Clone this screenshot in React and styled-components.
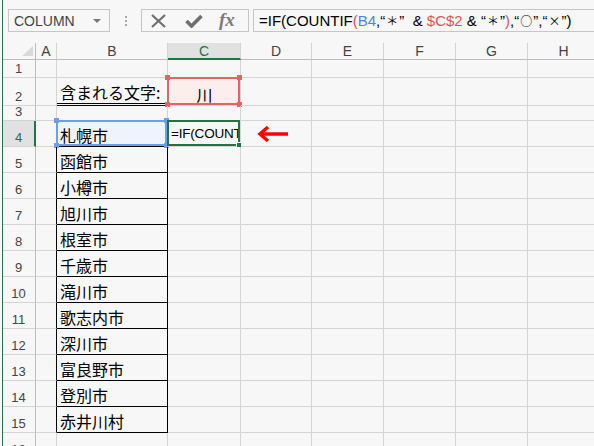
import React from 'react';
import styled, { createGlobalStyle } from 'styled-components';

const GlobalStyle = createGlobalStyle`
  html, body { margin: 0; padding: 0; background: #f7f7f7; }
  * { box-sizing: border-box; }
`;

const cities = ['札幌市', '函館市', '小樽市', '旭川市', '根室市', '千歳市', '滝川市', '歌志内市', '深川市', '富良野市', '登別市', '赤井川村'];
const letters = ['A', 'B', 'C', 'D', 'E', 'F', 'G', 'H'];
const rows = Array.from({ length: 16 }, (_, i) => i + 1);

const GRID = '#d4d4d4';
const HEAD_LINE = '#bcbcbc';
const GREEN = '#217346';
const RED = '#e06666';
const BLUE = '#6d9eeb';

function App() {
    return (
        <>
            <GlobalStyle />
            <Page>
                <Window>
                    <Toolbar>
                        <NameBox>
                            <span>COLUMN</span>
                            <DropArrow />
                        </NameBox>
                        <Grip>
                            <i /><i /><i />
                        </Grip>
                        <FxGroup>
                            <svg width="17" height="14" viewBox="0 0 17 14">
                                <path d="M2 1 L15 13 M15 1 L2 13" stroke="#6f6f6f" strokeWidth="2.2" fill="none" />
                            </svg>
                            <svg width="18" height="14" viewBox="0 0 18 14">
                                <path d="M1.5 7 L6.5 12 L16.5 2" stroke="#6f6f6f" strokeWidth="3.6" fill="none" />
                            </svg>
                            <FxText>fx</FxText>
                        </FxGroup>
                        <FormulaBox>
                            =IF(COUNTIF<Red>(</Red><Blue>B4</Blue>,“<Sym>＊</Sym>”  &amp; <Red>$C$2</Red> &amp; “<Sym>＊</Sym>”<Red>)</Red>,“<Sym>○</Sym>”,“<Sym>×</Sym>”)
                        </FormulaBox>
                    </Toolbar>

                    <Sheet>
                        <Corner>
                            <svg width="11" height="10" viewBox="0 0 11 10">
                                <polygon points="11,0 11,10 0,10" fill="#d9d9d9" />
                            </svg>
                        </Corner>
                        {letters.map((l) => (
                            <ColHead key={l} $active={l === 'C'}>{l}</ColHead>
                        ))}

                        {rows.map((r) => {
                            const inTable = r >= 4 && r <= 15;
                            return (
                                <React.Fragment key={r}>
                                    <RowHead $active={r === 4}>{r}</RowHead>
                                    <Cell $right={inTable ? '#000' : GRID} />
                                    <Cell
                                        $right={inTable ? '#000' : GRID}
                                        $bottom={r === 2 ? '3px double #000' : (r === 3 || inTable) ? '1px solid #000' : undefined}
                                        $fill={r === 4 ? '#eef3fd' : undefined}
                                    >
                                        {r === 2 && '含まれる文字:'}
                                        {inTable && cities[r - 4]}
                                        {r === 4 && (
                                            <Selection $color={BLUE}>
                                                <Handle $color={BLUE} $v="top" $h="left" />
                                                <Handle $color={BLUE} $v="top" $h="right" />
                                                <Handle $color={BLUE} $v="bottom" $h="left" />
                                                <Handle $color={BLUE} $v="bottom" $h="right" />
                                            </Selection>
                                        )}
                                    </Cell>
                                    <Cell $center={r === 2} $fill={r === 2 ? '#fdeeee' : undefined}>
                                        {r === 2 && '川'}
                                        {r === 2 && (
                                            <Selection $color={RED}>
                                                <Handle $color={RED} $v="top" $h="left" />
                                                <Handle $color={RED} $v="top" $h="right" />
                                                <Handle $color={RED} $v="bottom" $h="left" />
                                                <Handle $color={RED} $v="bottom" $h="right" />
                                            </Selection>
                                        )}
                                        {r === 4 && <Clip>=IF(COUNTIF(B4,“＊”</Clip>}
                                        {r === 4 && (
                                            <Selection $color={GREEN}>
                                                <FillHandle />
                                            </Selection>
                                        )}
                                    </Cell>
                                    <Cell $arrow={r === 4}>
                                        {r === 4 && (
                                            <svg width="32" height="20" viewBox="0 0 32 20">
                                                <path d="M4 10 L31 10" stroke="#ff0000" strokeWidth="3.5" fill="none" />
                                                <path d="M11 3 L3 10 L11 17" stroke="#ff0000" strokeWidth="3.5" fill="none" strokeLinejoin="miter" />
                                            </svg>
                                        )}
                                    </Cell>
                                    <Cell />
                                    <Cell />
                                    <Cell />
                                    <Cell />
                                </React.Fragment>
                            );
                        })}
                    </Sheet>
                </Window>
            </Page>
        </>
    );
}

export default App;

const Page = styled.div`
    height: 446px;
    width: 594px;
    padding-left: 2px;
    background: #f7f7f7;
    overflow: hidden;
    display: flex;
`;

const Window = styled.div`
    flex: 1;
    min-width: 0;
    border-left: 1px solid ${GREEN};
    display: flex;
    flex-direction: column;
`;

const Toolbar = styled.div`
    height: 43px;
    flex: none;
    display: flex;
    align-items: flex-start;
    padding: 9px 0 0 5px;
    font-family: "Liberation Sans", "Noto Sans CJK JP", sans-serif;
`;

const NameBox = styled.div`
    width: 102px;
    height: 23px;
    border: 1px solid #c6c6c6;
    display: flex;
    align-items: center;
    justify-content: space-between;
    padding: 0 8px 0 5px;
    font-size: 14px;
    color: #444;
`;

const DropArrow = styled.span`
    width: 0;
    height: 0;
    border-left: 4px solid transparent;
    border-right: 4px solid transparent;
    border-top: 4px solid #777;
`;

const Grip = styled.div`
    width: 31px;
    height: 23px;
    display: flex;
    flex-direction: column;
    align-items: center;
    justify-content: center;
    gap: 2px;

    i {
        width: 2px;
        height: 2px;
        background: #a8a8a8;
    }
`;

const FxGroup = styled.div`
    width: 108px;
    height: 23px;
    border: 1px solid #c6c6c6;
    display: flex;
    align-items: center;
    padding-left: 8px;
    gap: 18px;
`;

const FxText = styled.span`
    font: italic bold 19px "Liberation Serif", "DejaVu Serif", serif;
    color: #7a7a7a;
    margin-left: -2px;
    margin-top: -1px;
`;

const FormulaBox = styled.div`
    flex: 1;
    margin-left: 4px;
    height: 23px;
    border: 1px solid #c6c6c6;
    border-right: none;
    padding-left: 5px;
    display: flex;
    align-items: center;
    white-space: pre;
    font-size: 15px;
    color: #000;
    overflow: hidden;
`;

const Sym = styled.span`
    font-family: "Noto Sans CJK JP", sans-serif;
    font-size: 12px;
    line-height: 20px;
    padding: 0 1px;
`;

const Red = styled.span`
    color: #e5504f;
`;

const Blue = styled.span`
    color: #4a86e8;
`;

const Sheet = styled.div`
    display: grid;
    grid-template-columns: 33px 21px 111px 73px 71px 72px 72px 72px 72px;
    grid-template-rows: 17px 18px 28px 15px repeat(13, 26px);
    font-family: "Noto Sans CJK JP", sans-serif;
`;

const Corner = styled.div`
    border-right: 1px solid ${HEAD_LINE};
    border-bottom: 1px solid ${HEAD_LINE};
    display: flex;
    align-items: flex-end;
    justify-content: flex-end;
    padding: 0 2px 3px 0;
`;

const ColHead = styled.div`
    border-right: 1px solid ${GRID};
    border-bottom: ${(p) => (p.$active ? `2px solid ${GREEN}` : `1px solid ${HEAD_LINE}`)};
    background: ${(p) => (p.$active ? '#e1e1e1' : 'transparent')};
    color: ${(p) => (p.$active ? GREEN : '#444')};
    font: 14px "Liberation Sans", sans-serif;
    display: flex;
    align-items: center;
    justify-content: center;
    padding-top: ${(p) => (p.$active ? '1px' : '0')};
`;

const RowHead = styled.div`
    border-right: ${(p) => (p.$active ? `2px solid ${GREEN}` : `1px solid ${HEAD_LINE}`)};
    border-bottom: 1px solid ${GRID};
    background: ${(p) => (p.$active ? '#e1e1e1' : 'transparent')};
    color: ${(p) => (p.$active ? GREEN : '#444')};
    font: 13px/14px "Liberation Sans", sans-serif;
    display: flex;
    align-items: flex-end;
    justify-content: center;
    padding: 0 ${(p) => (p.$active ? '0' : '1px')} 1px 0;
`;

const Cell = styled.div`
    position: relative;
    min-width: 0;
    border-right: 1px solid ${(p) => p.$right || GRID};
    border-bottom: ${(p) => p.$bottom || `1px solid ${GRID}`};
    background: ${(p) => p.$fill || 'transparent'};
    display: flex;
    align-items: ${(p) => (p.$arrow ? 'center' : 'flex-end')};
    justify-content: ${(p) => (p.$center ? 'center' : 'flex-start')};
    padding: ${(p) => (p.$arrow ? '0 0 0 16px' : '0 2px 1px 3px')};
    font-size: 16px;
    line-height: 20px;
    color: #000;
    white-space: nowrap;
`;

const Clip = styled.span`
    display: block;
    flex: 1;
    min-width: 0;
    overflow: hidden;
    font: 13.5px "Liberation Sans", sans-serif;
    letter-spacing: -0.2px;
    line-height: 20px;
    margin-bottom: 1px;
`;

const Selection = styled.div`
    position: absolute;
    top: -1px;
    left: -1px;
    right: 0;
    bottom: 0;
    border: 2px solid ${(p) => p.$color};
    pointer-events: none;
`;

const Handle = styled.span`
    position: absolute;
    width: 5px;
    height: 5px;
    background: ${(p) => p.$color};
    ${(p) => p.$v}: -4px;
    ${(p) => p.$h}: -4px;
`;

const FillHandle = styled.span`
    position: absolute;
    right: -4px;
    bottom: -4px;
    width: 6px;
    height: 6px;
    background: ${GREEN};
    border: 1px solid #f7f7f7;
`;
